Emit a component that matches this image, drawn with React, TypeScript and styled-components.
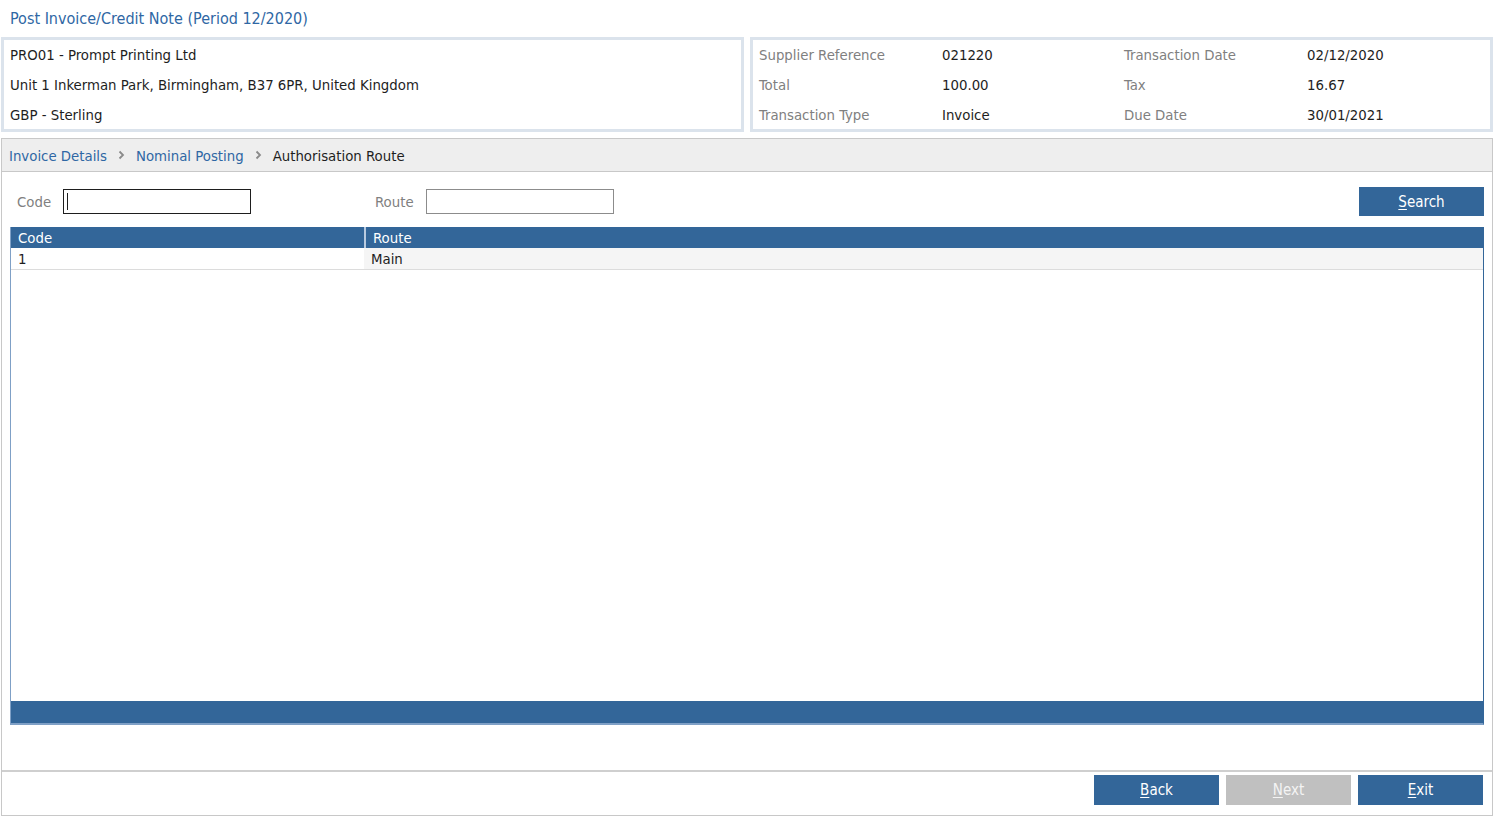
import React from "react";
import styled, { createGlobalStyle } from "styled-components";

const GlobalStyle = createGlobalStyle`
  html, body {
    margin: 0;
    padding: 0;
    background: #ffffff;
  }
  body {
    font-family: "DejaVu Sans Condensed", "Liberation Sans", sans-serif;
    font-size: 14.8px;
    color: #1e1e1e;
  }
`;

const blue = "#336699";

const Page = styled.div`
  width: 1500px;
  height: 818px;
  display: flex;
  flex-direction: column;
  box-sizing: border-box;
  padding: 0 7px 2px 1px;
`;

const Title = styled.h1`
  margin: 0;
  height: 37px;
  padding: 9px 0 0 9px;
  box-sizing: border-box;
  font-size: 16px;
  font-weight: normal;
  color: #2f67a4;
`;

const InfoRow = styled.div`
  display: flex;
  gap: 6px;
  height: 95px;
`;

const InfoBox = styled.div<{ cols?: string }>`
  flex: 1;
  border: 3px solid #dbe3ec;
  box-sizing: border-box;
  padding: 0 6px;
  display: grid;
  grid-template-columns: ${(p) => p.cols || "1fr"};
  grid-auto-rows: 29px;
  row-gap: 1px;
  align-content: start;
  align-items: center;
`;

const Plain = styled.div`
  color: #1e1e1e;
`;

const Label = styled.div`
  color: #808080;
`;

const Crumbs = styled.nav`
  margin-top: 6px;
  height: 34px;
  background: #eeeeee;
  border: 1px solid #c8c8c8;
  box-sizing: border-box;
  display: flex;
  align-items: center;
  padding-left: 7px;
  gap: 11px;
`;

const Crumb = styled.span<{ current?: boolean }>`
  color: ${(p) => (p.current ? "#1e1e1e" : "#2f67a4")};
`;

const Chevron = () => (
  <svg width="7" height="10" viewBox="0 0 7 10">
    <path d="M1.5 1.5 L5 5 L1.5 8.5" fill="none" stroke="#8a8a8a" strokeWidth="1.8" />
  </svg>
);

const Panel = styled.div`
  flex: 1;
  display: flex;
  flex-direction: column;
  border: 1px solid #c8c8c8;
  border-top: none;
`;

const Body = styled.div`
  flex: 1;
  display: flex;
  flex-direction: column;
  padding: 14px 8px 0 8px;
`;

const FilterRow = styled.div`
  display: flex;
  align-items: center;
  height: 30px;
  padding-left: 7px;
`;

const FilterLabel = styled.label<{ w: number }>`
  color: #808080;
  width: ${(p) => p.w}px;
`;

const Field = styled.div<{ focused?: boolean }>`
  width: 188px;
  height: 25px;
  box-sizing: border-box;
  border: 1px solid ${(p) => (p.focused ? "#1e1e1e" : "#8c8c8c")};
  margin-right: 124px;
  padding: 0 3px;
  display: flex;
  align-items: center;
`;

const Caret = styled.span`
  width: 1px;
  height: 17px;
  background: #1e1e1e;
`;

const Spacer = styled.div`
  flex: 1;
`;

const Button = styled.button<{ disabled?: boolean }>`
  width: 125px;
  height: 30px;
  border: none;
  background: ${(p) => (p.disabled ? "#c0c0c0" : blue)};
  color: ${(p) => (p.disabled ? "#f4f4f4" : "#ffffff")};
  font-family: inherit;
  font-size: 15px;
  padding: 0;
  u {
    text-decoration-thickness: 1px;
    text-underline-offset: 2px;
  }
`;

const SearchButton = styled(Button)`
  height: 29px;
  margin-top: 1px;
`;

const Grid = styled.div`
  margin-top: 11px;
  height: 498px;
  display: flex;
  flex-direction: column;
  border-left: 1px solid #7fa0c6;
  border-right: 1px solid ${blue};
  border-bottom: 2px solid #7fa0c6;
  box-sizing: border-box;
`;

const GridRow = styled.div<{ head?: boolean }>`
  display: grid;
  grid-template-columns: 353px 1fr;
  height: ${(p) => (p.head ? "21px" : "22px")};
  background: ${(p) => (p.head ? blue : "#ffffff")};
  color: ${(p) => (p.head ? "#ffffff" : "#1e1e1e")};
  border-bottom: ${(p) => (p.head ? "none" : "1px solid #dcdcdc")};
  box-sizing: border-box;
`;

const Cell = styled.div<{ head?: boolean; shade?: boolean }>`
  padding-left: 7px;
  display: flex;
  align-items: center;
  background: ${(p) => (p.shade ? "#f5f5f5" : "transparent")};
  border-left: ${(p) => (p.head ? "2px solid #b9cbe0" : "none")};
  &:first-child {
    border-left: none;
  }
`;

const GridFill = styled.div`
  flex: 1;
`;

const GridFoot = styled.div`
  height: 22px;
  background: ${blue};
`;

const Footer = styled.div`
  height: 45px;
  box-sizing: border-box;
  border-top: 2px solid #cfcfcf;
  display: flex;
  justify-content: flex-end;
  align-items: flex-start;
  gap: 7px;
  padding: 3px 9px 0 0;
`;

const rows = [{ code: "1", route: "Main" }];

export default function App() {
  return (
    <>
      <GlobalStyle />
      <Page>
        <Title>Post Invoice/Credit Note (Period 12/2020)</Title>
        <InfoRow>
          <InfoBox>
            <Plain>PRO01 - Prompt Printing Ltd</Plain>
            <Plain>Unit 1 Inkerman Park, Birmingham, B37 6PR, United Kingdom</Plain>
            <Plain>GBP - Sterling</Plain>
          </InfoBox>
          <InfoBox cols="183px 182px 183px 1fr">
            <Label>Supplier Reference</Label>
            <Plain>021220</Plain>
            <Label>Transaction Date</Label>
            <Plain>02/12/2020</Plain>
            <Label>Total</Label>
            <Plain>100.00</Plain>
            <Label>Tax</Label>
            <Plain>16.67</Plain>
            <Label>Transaction Type</Label>
            <Plain>Invoice</Plain>
            <Label>Due Date</Label>
            <Plain>30/01/2021</Plain>
          </InfoBox>
        </InfoRow>
        <Crumbs>
          <Crumb>Invoice Details</Crumb>
          <Chevron />
          <Crumb>Nominal Posting</Crumb>
          <Chevron />
          <Crumb current>Authorisation Route</Crumb>
        </Crumbs>
        <Panel>
          <Body>
            <FilterRow>
              <FilterLabel w={46}>Code</FilterLabel>
              <Field focused>
                <Caret />
              </Field>
              <FilterLabel w={51}>Route</FilterLabel>
              <Field />
              <Spacer />
              <SearchButton>
                <u>S</u>earch
              </SearchButton>
            </FilterRow>
            <Grid>
              <GridRow head>
                <Cell head>Code</Cell>
                <Cell head>Route</Cell>
              </GridRow>
              {rows.map((r) => (
                <GridRow key={r.code}>
                  <Cell>{r.code}</Cell>
                  <Cell shade>{r.route}</Cell>
                </GridRow>
              ))}
              <GridFill />
              <GridFoot />
            </Grid>
          </Body>
          <Footer>
            <Button>
              <u>B</u>ack
            </Button>
            <Button disabled>
              <u>N</u>ext
            </Button>
            <Button>
              <u>E</u>xit
            </Button>
          </Footer>
        </Panel>
      </Page>
    </>
  );
}
